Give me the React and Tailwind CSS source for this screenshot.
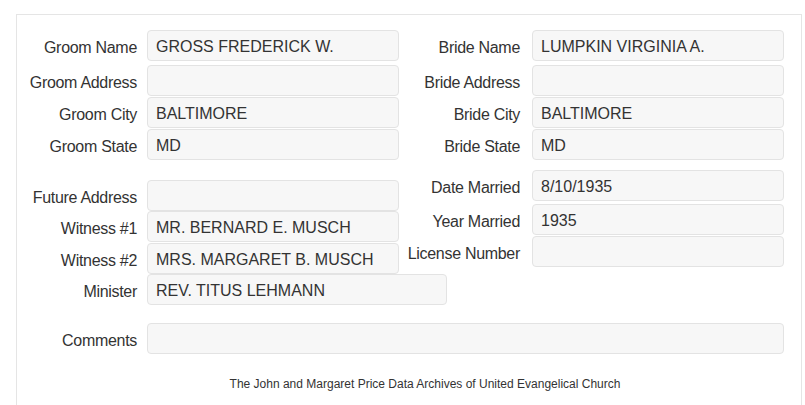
const groomRows = [
  { label: "Groom Name", value: "GROSS FREDERICK W.", mt: "mt-0" },
  { label: "Groom Address", value: "", mt: "mt-[4px]" },
  { label: "Groom City", value: "BALTIMORE", mt: "mt-[1px]" },
  { label: "Groom State", value: "MD", mt: "mt-[1px]" },
];

const brideRows = [
  { label: "Bride Name", value: "LUMPKIN VIRGINIA A.", mt: "mt-0" },
  { label: "Bride Address", value: "", mt: "mt-[4px]" },
  { label: "Bride City", value: "BALTIMORE", mt: "mt-[1px]" },
  { label: "Bride State", value: "MD", mt: "mt-[1px]" },
];

function Field({ value, width = "w-[252px]" }) {
  return (
    <div
      className={`${width} h-[31px] shrink-0 overflow-hidden rounded-[4px] border border-[#e3e3e3] bg-[#f7f7f7] px-[8px] text-[16px] leading-[31px] text-[#333]`}
    >
      {value}
    </div>
  );
}

function Row({ label, value, mt, labelWidth = "w-[120px]", gap = "gap-[10px]", width }) {
  return (
    <div className={`flex items-center ${gap} ${mt}`}>
      <div className={`${labelWidth} shrink-0 whitespace-nowrap pt-[4px] text-right text-[16px] tracking-[-0.3px] text-[#333]`}>
        {label}
      </div>
      <Field value={value} width={width} />
    </div>
  );
}

export default function App() {
  return (
    <div className="h-[405px] overflow-hidden bg-white font-['Liberation_Sans',Arial,sans-serif]">
      <div className="ml-[16px] mt-[14px] h-[420px] w-[786px] border border-[#e5e5e5] pt-[15px]">
        <div className="flex">
          <div className="w-[383px]">
            {groomRows.map((r) => (
              <Row key={r.label} {...r} />
            ))}
          </div>
          <div>
            {brideRows.map((r) => (
              <Row key={r.label} {...r} gap="gap-[12px]" />
            ))}
          </div>
        </div>

        <div className="flex">
          <div className="w-[383px] pt-[20px]">
            <Row label="Future Address" value="" mt="mt-0" />
            <Row label="Witness #1" value="MR. BERNARD E. MUSCH" mt="mt-0" />
            <Row label="Witness #2" value="MRS. MARGARET B. MUSCH" mt="mt-[1px]" />
            <Row label="Minister" value="REV. TITUS LEHMANN" mt="mt-0" width="w-[300px]" />
          </div>
          <div className="pt-[10px]">
            <Row label="Date Married" value="8/10/1935" mt="mt-0" gap="gap-[12px]" />
            <Row label="Year Married" value="1935" mt="mt-[3px]" gap="gap-[12px]" />
            <Row label="License Number" value="" mt="mt-[1px]" gap="gap-[12px]" />
          </div>
        </div>

        <div className="mt-[18px]">
          <Row label="Comments" value="" mt="mt-0" width="w-[637px]" />
        </div>

        <div className="mt-[21px] flex justify-center pl-[32px] text-[12px] text-[#333]">
          The John and Margaret Price Data Archives of United Evangelical Church
        </div>
      </div>
    </div>
  );
}
